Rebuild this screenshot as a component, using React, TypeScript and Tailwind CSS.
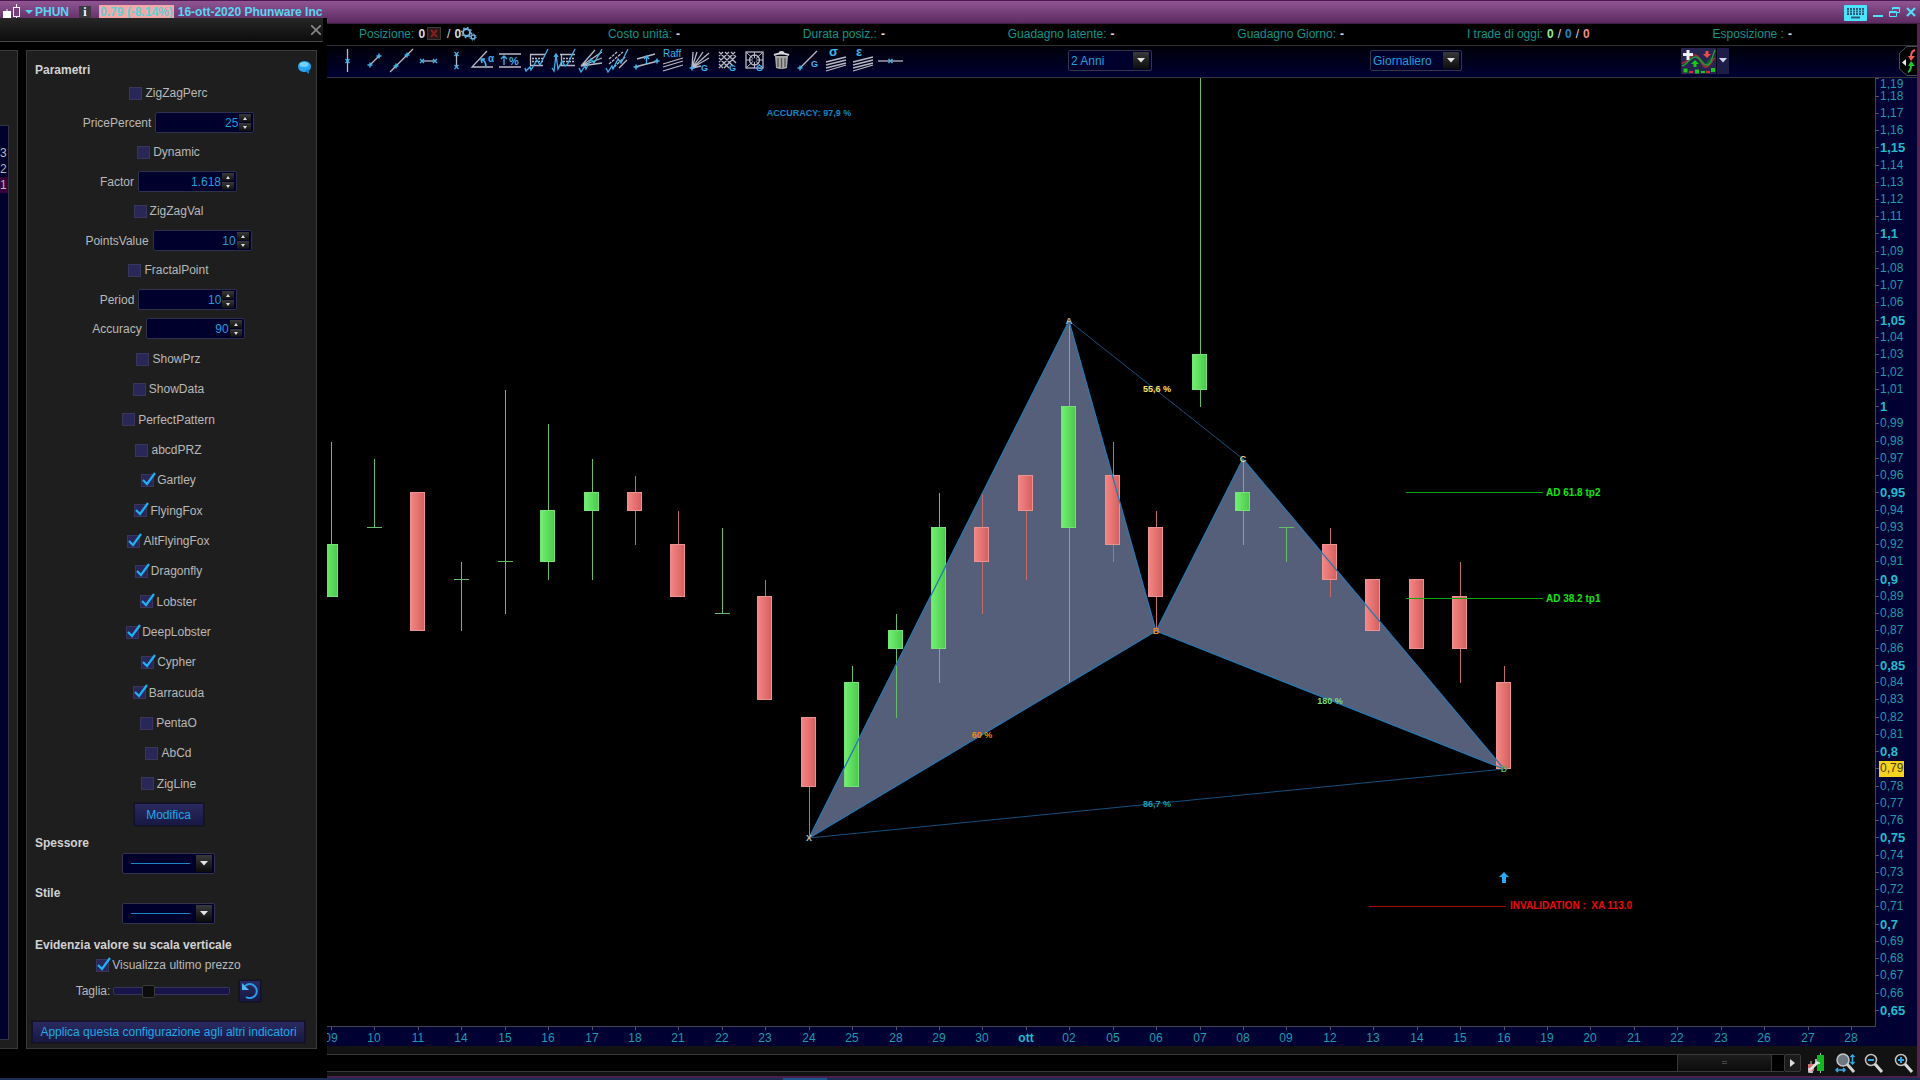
import { ReactNode, useState } from 'react';

type Candle = [color: 'up' | 'down', top: number, bottom: number, high: number, low: number];

const DAYS = [
  '09', '10', '11', '14', '15', '16', '17', '18', '21', '22', '23', '24', '25', '28', '29', '30', 'ott', '02',
  '05', '06', '07', '08', '09', '12', '13', '14', '15', '16', '19', '20', '21', '22', '23', '26', '27', '28',
];

const CANDLES: Candle[] = [
  ['up', 0.92, 0.89, 0.98, 0.89],
  ['up', 0.93, 0.93, 0.97, 0.93],
  ['down', 0.95, 0.87, 0.95, 0.87],
  ['up', 0.9, 0.9, 0.91, 0.87],
  ['up', 0.91, 0.91, 1.01, 0.88],
  ['up', 0.94, 0.91, 0.99, 0.9],
  ['up', 0.95, 0.94, 0.97, 0.9],
  ['down', 0.95, 0.94, 0.96, 0.92],
  ['down', 0.92, 0.89, 0.94, 0.89],
  ['up', 0.88, 0.88, 0.93, 0.88],
  ['down', 0.89, 0.83, 0.9, 0.83],
  ['down', 0.82, 0.78, 0.82, 0.75],
  ['up', 0.84, 0.78, 0.85, 0.78],
  ['up', 0.87, 0.86, 0.88, 0.82],
  ['up', 0.93, 0.86, 0.95, 0.84],
  ['down', 0.93, 0.91, 0.95, 0.88],
  ['down', 0.96, 0.94, 0.96, 0.9],
  ['up', 1, 0.93, 1.05, 0.84],
  ['down', 0.96, 0.92, 0.98, 0.91],
  ['down', 0.93, 0.89, 0.94, 0.87],
  ['up', 1.03, 1.01, 1.25, 1],
  ['up', 0.95, 0.94, 0.97, 0.92],
  ['up', 0.93, 0.93, 0.93, 0.91],
  ['down', 0.92, 0.9, 0.93, 0.89],
  ['down', 0.9, 0.87, 0.9, 0.87],
  ['down', 0.9, 0.86, 0.9, 0.86],
  ['down', 0.89, 0.86, 0.91, 0.84],
  ['down', 0.84, 0.79, 0.85, 0.79],
];

const px = (i: number) => Math.round(4 + i * 43.43);
const py = (price: number) => Math.round(330 + (1 - price) * 1725);

const TICKS = Array.from({ length: 55 }, (_, i) => 119 - i);

const X = { x: px(11), y: py(0.75) };
const A = { x: px(17), y: py(1.05) };
const B = { x: px(19), y: py(0.87) };
const C = { x: px(21), y: py(0.97) };
const D = { x: px(27), y: py(0.79) };

function Chart() {
  return (
    <svg
      viewBox="0 1 1590 968"
      preserveAspectRatio="xMinYMin meet"
      className="block h-full w-full font-['Liberation_Sans',Arial,sans-serif]"
      role="img"
      aria-label="PHUN grafico giornaliero"
    >
      <defs>
        <linearGradient id="up">
          <stop offset="0" stopColor="#72f072" />
          <stop offset="1" stopColor="#4cc94c" />
        </linearGradient>
        <linearGradient id="down">
          <stop offset="0" stopColor="#f58684" />
          <stop offset="1" stopColor="#d4605e" />
        </linearGradient>
      </defs>

      <polygon points={`${X.x},${X.y} ${A.x},${A.y} ${B.x},${B.y}`} fill="#565f79" />
      <polygon points={`${B.x},${B.y} ${C.x},${C.y} ${D.x},${D.y}`} fill="#565f79" />

      {/* candles */}
      {CANDLES.map(([kind, top, bottom, high, low], i) => {
        const x = px(i);
        const up = kind === 'up';
        return (
          <g key={i}>
            <line x1={x + 0.5} x2={x + 0.5} y1={py(high)} y2={py(low)} stroke={up ? '#66bd66' : '#c46c69'} />
            {top === bottom ? (
              <line x1={x - 7} x2={x + 8} y1={py(top) - 0.5} y2={py(top) - 0.5} stroke="#66bd66" />
            ) : (
              <rect
                x={x - 7.5}
                y={py(top) - 0.5}
                width={14}
                height={py(bottom) - py(top)}
                fill={up ? 'url(#up)' : 'url(#down)'}
                stroke={up ? '#74e274' : '#ec9290'}
                strokeWidth={1}
              />
            )}
          </g>
        );
      })}

      {/* harmonic pattern legs */}
      <g stroke="#2777b0" fill="none">
        <path d={`M${X.x} ${X.y}L${A.x} ${A.y}L${B.x} ${B.y}Z`} strokeWidth={1.3} />
        <path d={`M${B.x} ${B.y}L${C.x} ${C.y}L${D.x} ${D.y}Z`} strokeWidth={1.3} />
        <path d={`M${A.x} ${A.y}L${C.x} ${C.y}M${X.x} ${X.y}L${D.x} ${D.y}`} stroke="#16507f" />
      </g>

      <g fontSize={9} fontWeight={700} textAnchor="middle" dominantBaseline="central">
        <text x={482} y={36} fill="#0f86c8">ACCURACY: 97,9 %</text>
        <text x={px(19) + 1} y={312} fill="#ffe36a">55,6 %</text>
        <text x={px(15)} y={658} fill="#ee8a12">60 %</text>
        <text x={px(23)} y={624} fill="#74dd78">180 %</text>
        <text x={px(19) + 1} y={727} fill="#149fb4">86,7 %</text>
        <text x={X.x} y={X.y} fill="#b8b8b8">X</text>
        <text x={A.x} y={A.y} fill="#b8b8b8">A</text>
        <text x={B.x} y={B.y} fill="#ee8a12">B</text>
        <text x={C.x} y={C.y} fill="#e3d78a">C</text>
        <text x={D.x} y={D.y} fill="#4fb04f">D</text>
      </g>

      {/* targets */}
      <path d="M1079 415.500h137M1079 521.500h137" stroke="#0ba80b" />
      <path d="M1042 829.500h137" stroke="#a80a0a" />
      <g fontSize={10} fontWeight={700} dominantBaseline="central">
        <text x={1219} y={415} fill="#12e312">AD 61.8 tp2</text>
        <text x={1219} y={521} fill="#12e312">AD 38.2 tp1</text>
        <text x={1183} y={828} fill="#e80c0c" xmlSpace="preserve">INVALIDATION :  XA 113.0</text>
      </g>
      <path d="M1177 795l5 5h-3v6h-4v-6h-3z" fill="#27a9f5" />

      {/* scales */}
      <rect x={1548} y={0} width={42} height={970} fill="#000033" />
      <rect x={0} y={949} width={1590} height={20} fill="#000033" />
      <path d="M0 949.500H1548.500V0" stroke="#45454d" fill="none" />
      <g fontSize={12} dominantBaseline="central">
        {TICKS.map((t) => {
          const y = py(t / 100);
          const bold = t % 5 === 0;
          const label = String(t / 100).replace('.', ',');
          const last = t === 79;
          return (
            <g key={t}>
              <line x1={1548} x2={1552} y1={y - 0.5} y2={y - 0.5} stroke="#55556a" />
              {last && <rect x={1552} y={y - 8} width={25} height={16} fill="#f4d31f" />}
              <text
                x={1553}
                y={t === 119 ? 7 : y - 1}
                fontSize={bold ? 13 : 12}
                fontWeight={bold ? 700 : 400}
                fill={last ? '#4a3c00' : bold ? '#21bccd' : '#1c9cae'}
              >
                {label}
              </text>
            </g>
          );
        })}
        {DAYS.map((d, i) => (
          <g key={i}>
            <line x1={px(i) + 0.5} x2={px(i) + 0.5} y1={950} y2={953} stroke="#55556a" />
            <text
              x={px(i)}
              y={961}
              textAnchor="middle"
              fontWeight={d === 'ott' ? 700 : 400}
              fill={d === 'ott' ? '#21bccd' : '#1c9cae'}
            >
              {d}
            </text>
          </g>
        ))}
      </g>
    </svg>
  );
}

function Cross({ x, y }: { x: number; y: number }) {
  return <path d={`M${x - 2} ${y - 2}l4 4M${x - 2} ${y + 2}l4-4`} stroke="#3fb4e8" strokeWidth={1.3} />;
}

function Plus({ x, y }: { x: number; y: number }) {
  return <path d={`M${x - 2.5} ${y}h5M${x} ${y - 2.5}v5`} stroke="#3fb4e8" strokeWidth={1.5} />;
}

function Letter({ x, y, size = 9, children }: { x: number; y: number; size?: number; children: string }) {
  return (
    <text x={x} y={y} fontSize={size} fontWeight={700} fill="#3fb4e8" stroke="none">
      {children}
    </text>
  );
}

const TOOLS: { name: string; art: ReactNode }[] = [
  { name: 'Linea verticale', art: <><path d="M13.500 3v23" /><Cross x={13.5} y={15} /></> },
  { name: 'Segmento', art: <><path d="M9 19l9-9" /><Plus x={9} y={19} /><Plus x={18} y={10} /></> },
  { name: 'Retta', art: <><path d="M2 26L25 3" /><Plus x={8} y={20} /><Plus x={19} y={9} /></> },
  { name: 'Segmento orizzontale', art: <><path d="M6 15h15" /><Cross x={7} y={15} /><Cross x={20} y={15} /></> },
  { name: 'Segmento verticale', art: <><path d="M13.500 8v14" /><Cross x={13.5} y={8} /><Cross x={13.5} y={21} /></> },
  {
    name: 'Angolo',
    art: (
      <>
        <path d="M17 5L2 21h21" />
        <path d="M11 13c3 1 5 4 5 8M11 13l1 4M11 13l4 0" stroke="#3fb4e8" strokeWidth={1.6} />
        <Letter x={18} y={16} size={10}>α</Letter>
      </>
    ),
  },
  {
    name: 'Percentuale',
    art: (
      <>
        <path d="M2 8h22M2 21h22" />
        <path d="M7 19v-9M4 13l3-3 3 3" stroke="#3fb4e8" />
        <Letter x={12} y={19} size={11}>%</Letter>
      </>
    ),
  },
  {
    name: 'Ritracciamento',
    art: (
      <>
        <path d="M6 8.500h15M6 19.500h13M6.500 9v10" />
        <path d="M8 12.500h12M8 15.500h11" strokeDasharray="2 1" />
        <path d="M1 22l1 3 4-4 1 3 6-10 3 5 8-16" stroke="#3fb4e8" />
      </>
    ),
  },
  {
    name: 'Estensione',
    art: (
      <>
        <path d="M9 8.500h15M9 19.500h15M10.500 8v11" />
        <path d="M12 12.500h12M12 15.500h12" strokeDasharray="2 1" />
        <path d="M1 22l2 3 2-16 2 14 4-8 3 5 2-1 8-16M3 11l2-3 2 3" stroke="#3fb4e8" />
      </>
    ),
  },
  {
    name: 'Ventaglio',
    art: (
      <>
        <path d="M3 20L17 4M3 20L24 6M3 20L24 12M3 20L24 17" />
        <path d="M1 22l2 4 4-6 1 3 5-10 3 4 8-14" stroke="#3fb4e8" />
      </>
    ),
  },
  {
    name: 'Parallele',
    art: (
      <>
        <path d="M4 13l8-7M4 18L18 6M9 21L20 11" strokeDasharray="3 1" />
        <path d="M14 22l8-8" />
        <path d="M1 22l2 4 4-6 1 3 5-10 3 4 7-14" stroke="#3fb4e8" />
      </>
    ),
  },
  {
    name: 'Canale',
    art: (
      <>
        <path d="M4 13l18-5M2 21l23-6" />
        <path d="M13.500 11v7M11 13l2.500-3 2.500 3" stroke="#3fb4e8" />
        <Plus x={3} y={21} /><Plus x={24} y={15} />
      </>
    ),
  },
  {
    name: 'Raff',
    art: (
      <>
        <text x={3} y={11} fontSize={10} fill="#3fb4e8" stroke="none">Raff</text>
        <path d="M3 18l20-6M3 21l20-6M3 25l20-6" />
      </>
    ),
  },
  {
    name: 'Ventaglio di Gann',
    art: (
      <>
        <path d="M5 22L6 6M5 22l5-16M5 22L16 6M5 22L22 7M5 22l17-10M5 22l9-2" />
        <Plus x={5} y={22} />
        <Letter x={14} y={25}>G</Letter>
      </>
    ),
  },
  {
    name: 'Griglia di Gann',
    art: (
      <>
        <path d="M5 10l4-4M5 16L15 6M5 22L21 6M10 22L22 10M5 6l14 14M11 6l11 11M17 6l5 5M5 12l10 10M5 18l4 4" />
        <Letter x={15} y={25}>G</Letter>
      </>
    ),
  },
  {
    name: 'Quadrato di Gann',
    art: (
      <>
        <rect x={5} y={6} width={17} height={16} />
        <path d="M5 6l17 16M22 6L5 22M13.500 6v16M5 14h17" strokeWidth={1} />
        <circle cx={13.5} cy={14} r={5} />
        <circle cx={13.5} cy={14} r={2} fill="#000018" stroke="none" />
        <Letter x={15} y={25}>G</Letter>
      </>
    ),
  },
  {
    name: 'Elimina',
    art: (
      <>
        <path d="M7 10h13l-1 12q-5.500 2-11 0z" fill="#a7a7a7" stroke="none" />
        <path d="M6 9q7-3 15 0M11 7q2.500-2 5 0" stroke="#d8d8d8" strokeWidth={2} />
        <path d="M10 12v9M13.500 12v10M17 12v9" stroke="#555" />
      </>
    ),
  },
  { name: 'Linea di Gann', art: <><path d="M5 22L22 5" /><Plus x={5} y={22} /><Letter x={16} y={21}>G</Letter></> },
  { name: 'Deviazione', art: <><path d="M3 16l20-5M3 19l20-5M3 22l20-5M3 25l20-6" /><Letter x={6} y={10} size={13}>σ</Letter></> },
  { name: 'Errore', art: <><path d="M3 16l20-5M3 19l20-5M3 22l20-5M3 25l20-6" /><Letter x={6} y={10} size={13}>ε</Letter></> },
  { name: 'Linea orizzontale', art: <><path d="M1 15h25" /><Cross x={13.5} y={15} /></> },
];

function Select({ label, options, className }: { label: string; options: string[]; className: string }) {
  return (
    <div className={`relative h-[21px] ${className}`}>
      <select
        aria-label={label}
        className="block h-full w-full appearance-none rounded-xs border border-[#34344c] bg-[#00002c] pl-0.5 text-xs text-[#1e9fdc] outline-none"
      >
        {options.map((o) => (
          <option key={o}>{o}</option>
        ))}
      </select>
      <DropArrow />
    </div>
  );
}

function DropArrow() {
  return (
    <span className="pointer-events-none absolute top-[2px] right-[3px] flex h-[17px] w-4 items-center justify-center bg-linear-to-b from-[#3a3a3a] to-[#0c0c0c]">
      <svg width="8" height="5" viewBox="0 0 8 5"><path d="M0 0h8L4 4.500z" fill="#e4e4e4" /></svg>
    </span>
  );
}

function Info({ label, className = '', children }: { label: string; className?: string; children: ReactNode }) {
  return (
    <div className={`flex items-center gap-1 whitespace-nowrap ${className}`}>
      <span className="text-[#12958c]">{label}</span>
      <span className="flex items-center font-bold text-[#dcdcdc]">{children}</span>
    </div>
  );
}

function TitleBar() {
  return (
    <header className="flex h-6 items-center border-t border-b border-t-[#4c1750] border-b-[#3c2040] bg-linear-to-b from-[#8f5593] to-[#5c2a60] pr-1 pl-[3px] text-xs font-bold text-[#5ad6f2]">
      <svg width="18" height="17" viewBox="0 0 18 17">
        <path d="M4 5v12M13.500 0v17" stroke="#eee" />
        <rect x="0" y="7" width="8" height="8" fill="#fff" />
        <rect x="10.500" y="3.500" width="6" height="9" fill="#75417a" stroke="#eee" />
      </svg>
      <button type="button" className="ml-1 flex items-center gap-0.5">
        <svg width="8" height="4" viewBox="0 0 8 4"><path d="M0 0h8L4 4z" fill="#5ad6f2" /></svg>
        PHUN
      </button>
      <button type="button" aria-label="Informazioni" className="ml-2.5 flex h-3 w-3 items-center justify-center bg-[#3a3a40] font-['Liberation_Serif',serif] text-xs leading-3 text-white">
        i
      </button>
      <span className="ml-2 bg-[#f3a8a8] px-px leading-[14px] text-[#62cfd6]">0.79 (-8.14%)</span>
      <span className="ml-1">16-ott-2020 Phunware Inc</span>
      <div className="ml-auto flex items-center gap-1.5">
        <button type="button" aria-label="Tastiera" className="pt-0.5">
          <svg width="23" height="16" viewBox="0 0 23 16" className="block">
            <rect width="23" height="16" rx="1" fill="#4ce4fa" />
            <path d="M3 4h17M3 6.500h17M3 9h17" stroke="#2f5a78" strokeWidth="2" strokeDasharray="2 1" />
            <path d="M7 12.500h9" stroke="#2f5a78" strokeWidth="2" />
          </svg>
        </button>
        <button type="button" aria-label="Riduci">
          <svg width="10" height="16" viewBox="0 0 10 16" className="block"><path d="M0 12h10" stroke="#4ce4fa" strokeWidth="2" /></svg>
        </button>
        <button type="button" aria-label="Ripristina">
          <svg width="11" height="10" viewBox="0 0 11 10" className="block" fill="none" stroke="#4ce4fa">
            <path d="M3.500 3V.500h7v5H8M3.500 1.500h7" />
            <path d="M.500 4.500h7v5h-7zM.500 5.500h7" />
          </svg>
        </button>
        <button type="button" aria-label="Chiudi">
          <svg width="10" height="10" viewBox="0 0 10 10" className="block"><path d="M1 1l8 8M9 1L1 9" stroke="#4ce4fa" strokeWidth="2" /></svg>
        </button>
      </div>
    </header>
  );
}

function Toolbar() {
  return (
    <div className="flex h-8 items-center border-b border-[#33333a] bg-linear-to-b from-[#000008] to-[#000033] pb-[2px] pl-[334px]">
      <div className="flex w-[570px] justify-between">
        {TOOLS.map((t) => (
          <button key={t.name} type="button" title={t.name} aria-label={t.name}>
            <svg width="27" height="29" viewBox="0 0 27 29" fill="none" stroke="#b9b9c4" strokeWidth="1.300" className="block">
              {t.art}
            </svg>
          </button>
        ))}
      </div>
      <Select label="Periodo" options={['2 Anni', '5 Anni']} className="ml-[164px] w-[84px]" />
      <Select label="Intervallo" options={['Giornaliero', 'Settimanale']} className="ml-[218px] w-[92px]" />
      <div className="ml-[219px] flex gap-px">
        <button type="button" aria-label="Aggiungi indicatore" className="bg-[#25254f]">
          <svg width="35" height="26" viewBox="0 0 35 26" fill="none" className="block">
            <path d="M16 9q6 1 8 8 3-6 8-9l-7 12q-5-2-9-11z" fill="#12602a" />
            <path d="M1 15c6 0 7-8 13-8s6 12 11 12 6-8 9-9" stroke="#b02a35" strokeWidth="1.500" />
            <path d="M1 18c6-2 9-10 14-9s6 8 11 8 5-9 8-15" stroke="#1f9c3a" strokeWidth="1.500" />
            <path d="M2 6.500h10M7 2v10" stroke="#eceff5" strokeWidth="3" />
            <path d="M26 10l-4-4h2.500V3h3v3H30z" fill="#f04a4a" />
            <path d="M14 12l4 4h-2.500v3h-3v-3H10z" fill="#19c819" />
            <path d="M2.500 22.500h4M14 23.500h4M30 22h4" stroke="#19c819" strokeWidth="4" />
            <path d="M8 24h4M25 24h4" stroke="#d83030" strokeWidth="2" />
            <path d="M20 24h4" stroke="#19c819" strokeWidth="2" />
          </svg>
        </button>
        <button type="button" aria-label="Altri indicatori" className="flex w-3 items-center justify-center bg-[#1d1d48]">
          <svg width="8" height="5" viewBox="0 0 8 5"><path d="M0 0h8L4 4.500z" fill="#d6d6f0" /></svg>
        </button>
      </div>
      <button type="button" aria-label="Ordini" className="ml-auto">
        <svg width="18" height="30" viewBox="0 0 18 30" fill="none" className="block">
          <path d="M18 .500H8L.500 7v16L8 29.500h10" fill="#000" stroke="#4a4a55" />
          <path d="M7 13v7l-4-3.500z" fill="#e8e8e8" />
          <path d="M16 4q-4 1-4 7" stroke="#f05a5a" strokeWidth="2" />
          <path d="M9 10h7l-4 5z" fill="#f05a5a" />
          <path d="M9 26q3-1 3-7" stroke="#1ec828" strokeWidth="2" />
          <path d="M9 20h7l-4-5z" fill="#1ec828" />
        </svg>
      </button>
    </div>
  );
}

function ScrollBar() {
  return (
    <div className="flex h-8 items-center border-b-2 border-[#4b1f4c] bg-[#121212] pt-[3px] pr-[3px] pl-[327px]">
      <div className="flex h-[18px] flex-1 justify-end border-y border-[#3a3a3a] bg-black pr-3">
        <div className="flex w-[95px] flex-col items-center justify-center gap-px border-x border-[#3a3a3a] bg-linear-to-b from-[#1d1d1d] to-[#0b0b0b]">
          <span className="h-px w-[5px] bg-[#484848]" />
          <span className="h-px w-[5px] bg-[#484848]" />
        </div>
      </div>
      <button type="button" aria-label="Scorri a destra" className="flex h-[18px] w-[17px] items-center justify-center rounded-xs border border-[#3a3a3a] bg-[#1b1b1b]">
        <svg width="5" height="8" viewBox="0 0 5 8"><path d="M0 0v8l5-4z" fill="#ddd" /></svg>
      </button>
      <button type="button" aria-label="Impostazioni grafico" className="ml-1.5">
        <svg width="18" height="22" viewBox="0 0 18 22" fill="none" className="block">
          <path d="M4 9v12M13.500 1v20" stroke="#bbb" />
          <rect x="10" y="3" width="7" height="16" fill="#12b822" />
          <rect x="1" y="12" width="6" height="7" fill="#d07070" />
          <path d="M3 18l8-8" stroke="#e4e4e4" strokeWidth="2.500" />
          <path d="M9 7v4h4M2 16v4h4" stroke="#e4e4e4" strokeWidth="1.500" />
        </svg>
      </button>
      <button type="button" aria-label="Adatta zoom" className="ml-2.5">
        <svg width="21" height="22" viewBox="0 0 21 22" fill="none" className="block">
          <circle cx="8" cy="8" r="6" fill="#6d7882" stroke="#c4c4c4" strokeWidth="1.500" />
          <path d="M12 12l7 8" stroke="#d0d0d0" strokeWidth="3" />
          <path d="M17.500 3v9M15.500 5l2-2 2 2M15.500 10l2 2 2-2M1 18h9M3 16l-2 2 2 2M8 16l2 2-2 2" stroke="#33a8e8" strokeWidth="1.500" />
        </svg>
      </button>
      <button type="button" aria-label="Riduci zoom" className="ml-2">
        <svg width="20" height="22" viewBox="0 0 20 22" fill="none" className="block">
          <circle cx="7" cy="8" r="5.500" stroke="#c4c4c4" strokeWidth="1.500" />
          <path d="M11 12l7 8" stroke="#d8d8d8" strokeWidth="3" />
          <path d="M4 8h6" stroke="#33a8e8" strokeWidth="2" />
        </svg>
      </button>
      <button type="button" aria-label="Aumenta zoom" className="ml-2.5">
        <svg width="20" height="22" viewBox="0 0 20 22" fill="none" className="block">
          <circle cx="7" cy="8" r="5.500" stroke="#c4c4c4" strokeWidth="1.500" />
          <path d="M11 12l7 8" stroke="#d8d8d8" strokeWidth="3" />
          <path d="M4 8h6M7 5v6" stroke="#33a8e8" strokeWidth="2" />
        </svg>
      </button>
    </div>
  );
}

function Check({ label, on = false }: { label: string; on?: boolean }) {
  const [checked, setChecked] = useState(on);
  return (
    <label className="flex h-[30px] shrink-0 items-center justify-center gap-[3px]">
      <span className="relative h-[13px] w-[13px]">
        <input
          type="checkbox"
          checked={checked}
          onChange={(e) => setChecked(e.target.checked)}
          className="block h-[13px] w-[13px] appearance-none border border-[#38365a] bg-[#292758]"
        />
        {checked && (
          <svg width="15" height="14" viewBox="0 0 15 14" className="pointer-events-none absolute -top-0.5 left-0">
            <path d="M2 8l4 4L14 1" stroke="#1fb0f5" strokeWidth="2.200" fill="none" />
          </svg>
        )}
      </span>
      {label}
    </label>
  );
}

function NumberField({ label, initial }: { label: string; initial: string }) {
  const [value, setValue] = useState(initial);
  const step = (by: number) => setValue(String(Number(value) + by));
  return (
    <div className="flex h-[29px] shrink-0 items-center justify-center gap-1">
      <label htmlFor={label}>{label}</label>
      <div className="flex h-[21px] w-[99px] items-center rounded-xs border border-[#2f2f4e] bg-[#00002c] pr-0.5">
        <input
          id={label}
          type="text"
          value={value}
          onChange={(e) => setValue(e.target.value)}
          className="h-full w-0 flex-1 bg-transparent pr-px text-right text-[#1e9fdc] outline-none"
        />
        <span className="flex flex-col gap-px">
          <button type="button" aria-label={`${label} +`} onClick={() => step(1)} className="flex h-2 w-3 items-center justify-center bg-linear-to-b from-[#3a3a3a] to-[#111]">
            <svg width="4" height="3" viewBox="0 0 4 3"><path d="M0 3h4L2 0z" fill="#ddd" /></svg>
          </button>
          <button type="button" aria-label={`${label} -`} onClick={() => step(-1)} className="flex h-2 w-3 items-center justify-center bg-linear-to-b from-[#3a3a3a] to-[#111]">
            <svg width="4" height="3" viewBox="0 0 4 3"><path d="M0 0h4L2 3z" fill="#ddd" /></svg>
          </button>
        </span>
      </div>
    </div>
  );
}

function LineSelect({ id }: { id: string }) {
  return (
    <div className="relative mx-auto h-[21px] w-[93px]">
      <select id={id} className="block h-full w-full appearance-none rounded-xs border border-[#34344c] bg-[#00002c] outline-none">
        <option value="1" />
      </select>
      <span className="pointer-events-none absolute top-2.5 left-[9px] h-px w-[59px] bg-[#1b86c4]" />
      <DropArrow />
    </div>
  );
}

const BLUE_BUTTON =
  'block border border-[#12122e] bg-linear-to-b from-[#2a2a60] to-[#181844] text-[#1ea8e4] shadow-[0_0_1px_#000]';

function ParametersDialog() {
  const [size, setSize] = useState(27);
  return (
    <section role="dialog" aria-label="Parametri" className="absolute top-[18px] bottom-0.5 left-0 flex w-[327px] flex-col bg-black text-xs text-[#b9b9b9]">
      <div className="mr-1 flex h-6 shrink-0 items-center justify-end border-b border-[#4a4a4a] bg-linear-to-b from-[#262626] to-[#0d0d0d]">
        <button type="button" aria-label="Chiudi" className="mr-[2px]">
          <svg width="10" height="10" viewBox="0 0 10 10" className="block"><path d="M0 0l10 10M10 0L0 10" stroke="#8a8a8a" strokeWidth="1.600" /></svg>
        </button>
      </div>

      <div className="flex flex-1 gap-2 pt-2 pr-2.5 pb-[29px]">
        {/* tail of the indicator list */}
        <div className="w-[18px] border-y border-r border-[#3a3a3a] bg-[#1e1e1e] pt-[74px] pb-2">
          <ul className="h-full w-[9px] border-y border-r border-[#33333f] bg-[#00002c] pt-[19px] text-right leading-4">
            <li className="pr-0.5">3</li>
            <li className="pr-0.5">2</li>
            <li className="bg-[#36003a] pr-0.5">1</li>
          </ul>
        </div>

        <form className="flex flex-1 flex-col border border-[#3a3a3a] bg-[#1e1e1e]" onSubmit={(e) => e.preventDefault()}>
          <div className="flex h-[27px] items-end justify-between pr-1 pl-2">
            <h2 className="leading-4 font-bold text-[#d2d2d2]">Parametri</h2>
            <button type="button" aria-label="Aiuto" className="mr-px mb-1">
              <svg width="13" height="13" viewBox="0 0 13 13" className="block">
                <ellipse cx="6.500" cy="5.500" rx="6.500" ry="5.500" fill="#27a7f3" />
                <path d="M7 10l4-2v5z" fill="#1b86d0" />
                <ellipse cx="6" cy="3.500" rx="4.500" ry="2.500" fill="#74d0ff" />
              </svg>
            </button>
          </div>

          <div className="flex flex-col pr-1.5">
            <Check label="ZigZagPerc" />
            <NumberField label="PricePercent" initial="25" />
            <Check label="Dynamic" />
            <NumberField label="Factor" initial="1.618" />
            <Check label="ZigZagVal" />
            <NumberField label="PointsValue" initial="10" />
            <Check label="FractalPoint" />
            <NumberField label="Period" initial="10" />
            <NumberField label="Accuracy" initial="90" />
            <div className="mt-px flex h-[455px] flex-col justify-between">
              <Check label="ShowPrz" />
              <Check label="ShowData" />
              <Check label="PerfectPattern" />
              <Check label="abcdPRZ" />
              <Check label="Gartley" on />
              <Check label="FlyingFox" on />
              <Check label="AltFlyingFox" on />
              <Check label="Dragonfly" on />
              <Check label="Lobster" on />
              <Check label="DeepLobster" on />
              <Check label="Cypher" on />
              <Check label="Barracuda" on />
              <Check label="PentaO" />
              <Check label="AbCd" />
              <Check label="ZigLine" />
            </div>
            <button type="submit" className={`${BLUE_BUTTON} mx-auto mt-1 h-[23px] w-[70px]`}>Modifica</button>

            <label htmlFor="spessore" className="mt-2 mb-px ml-2 leading-[18px] font-bold text-[#d2d2d2]">Spessore</label>
            <LineSelect id="spessore" />
            <label htmlFor="stile" className="mt-2.5 mb-px ml-2 leading-[18px] font-bold text-[#d2d2d2]">Stile</label>
            <LineSelect id="stile" />

            <h3 className="mt-3 ml-2 leading-[18px] font-bold text-[#d2d2d2]">Evidenzia valore su scala verticale</h3>
            <div className="-mt-1">
              <Check label="Visualizza ultimo prezzo" on />
            </div>
            <div className="flex items-center justify-center gap-[3px]">
              <label htmlFor="taglia">Taglia:</label>
              <input
                id="taglia"
                type="range"
                value={size}
                onChange={(e) => setSize(Number(e.target.value))}
                className="h-2 w-[117px] appearance-none rounded-xs border border-[#34345c] bg-[#17144a] [&::-webkit-slider-thumb]:h-[13px] [&::-webkit-slider-thumb]:w-[13px] [&::-webkit-slider-thumb]:appearance-none [&::-webkit-slider-thumb]:rounded-xs [&::-webkit-slider-thumb]:border [&::-webkit-slider-thumb]:border-[#3a3a3a] [&::-webkit-slider-thumb]:bg-[#0c0c0c]"
              />
              <button type="button" aria-label="Ripristina taglia" className={`${BLUE_BUTTON} ml-1.5 h-[22px] w-[22px]`}>
                <svg width="20" height="20" viewBox="0 0 20 20" fill="none" className="block">
                  <path d="M5 5a7 7 0 1 1 1 11" stroke="#2a9be4" strokeWidth="2" />
                  <path d="M2 2v7h7z" fill="#4fb8f4" />
                </svg>
              </button>
            </div>
          </div>
          <button type="button" className={`${BLUE_BUTTON} mt-auto mr-[11px] mb-[5px] ml-[5px] h-[22px]`}>
            Applica questa configurazione agli altri indicatori
          </button>
        </form>
      </div>
    </section>
  );
}

export default function App() {
  return (
    <div className="relative flex h-screen flex-col overflow-hidden bg-black font-['Liberation_Sans',Arial,sans-serif]">
      <TitleBar />
      <div className="flex min-h-0 flex-1 flex-col border-r-3 border-[#54244f]">
        <div className="flex h-[22px] items-center justify-between border-b border-[#303030] pr-[125px] pb-[2px] pl-[359px] text-xs">
          <Info label="Posizione:" className="mr-2">
            0
            <svg width="14" height="13" viewBox="0 0 14 13" className="mx-0.5">
              <rect x=".500" y=".500" width="13" height="12" fill="#251818" stroke="#403838" />
              <path d="M4 3l6 7M10 3l-6 7" stroke="#8a1c1c" strokeWidth="2" />
            </svg>
            <span className="mx-1 font-normal">/</span>
            0
            <svg width="16" height="14" viewBox="0 0 16 14" fill="none" stroke="#6db4e4">
              <circle cx="5.500" cy="5.500" r="3.500" strokeWidth="2" />
              <circle cx="5.500" cy="5.500" r="5" strokeWidth="1.500" strokeDasharray="1.600 2.300" />
              <circle cx="12" cy="10" r="2" strokeWidth="1.500" />
              <circle cx="12" cy="10" r="3.200" strokeDasharray="1.200 1.300" />
            </svg>
          </Info>
          <Info label="Costo unità:">-</Info>
          <Info label="Durata posiz.:">-</Info>
          <Info label="Guadagno latente:">-</Info>
          <Info label="Guadagno Giorno:">-</Info>
          <Info label="I trade di oggi:">
            <span className="text-[#8fee8f]">0</span>
            <span className="mx-1 font-normal">/</span>
            <span className="text-[#1686c4]">0</span>
            <span className="mx-1 font-normal">/</span>
            <span className="text-[#f08a88]">0</span>
          </Info>
          <Info label="Esposizione :">-</Info>
        </div>
        <Toolbar />
        <main className="min-h-0 flex-1 pl-[327px]">
          <Chart />
        </main>
        <ScrollBar />
      </div>
      <div className="h-0.5 bg-[#1b2d55] pl-[783px]">
        <div className="h-full w-11 bg-[#1c5590]" />
      </div>
      <ParametersDialog />
    </div>
  );
}
